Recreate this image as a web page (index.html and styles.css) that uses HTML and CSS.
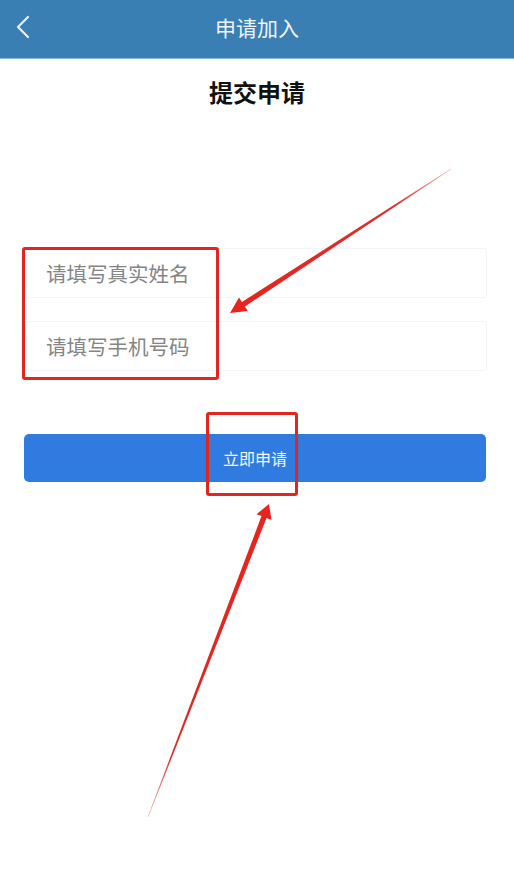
FILE: index.html
```html
<!DOCTYPE html>
<html lang="zh-CN">
<head>
<meta charset="utf-8">
<title>申请加入</title>
<link rel="stylesheet" href="styles.css">
</head>
<body>
<header class="topbar">
  <span class="back">
    <svg width="16" height="24" viewBox="0 0 16 24"><path d="M13 2 L3 12 L13 22" fill="none" stroke="#e9f1f8" stroke-width="2.2" stroke-linecap="round" stroke-linejoin="round"/></svg>
  </span>
  <h1 class="topbar-title">申请加入</h1>
</header>
<main class="page">
  <h2 class="subtitle">提交申请</h2>
  <div class="form">
    <div class="field"><span class="placeholder">请填写真实姓名</span></div>
    <div class="field"><span class="placeholder">请填写手机号码</span></div>
  </div>
  <div class="actions">
    <button class="submit">立即申请</button>
  </div>
</main>
<div class="mark mark-fields"></div>
<div class="mark mark-button"></div>
<svg class="arrows" width="514" height="894" viewBox="0 0 514 894">
  <defs>
    <linearGradient id="g1" x1="451" y1="169" x2="230" y2="313" gradientUnits="userSpaceOnUse">
      <stop offset="0" stop-color="#f2b8b6"/>
      <stop offset="0.25" stop-color="#d9302c"/>
      <stop offset="1" stop-color="#e8231d"/>
    </linearGradient>
    <linearGradient id="g2" x1="148" y1="817" x2="269" y2="504" gradientUnits="userSpaceOnUse">
      <stop offset="0" stop-color="#f2b8b6"/>
      <stop offset="0.2" stop-color="#dd2a24"/>
      <stop offset="1" stop-color="#e8231d"/>
    </linearGradient>
  </defs>
  <polygon fill="url(#g1)" points="230,313 247.8,311.0 244.9,306.5 451.2,169.3 450.8,168.7 241.9,302.1 239.0,297.6"/>
  <polygon fill="url(#g2)" points="269,504 271.5,520.0 266.5,518.1 148.3,817.1 147.7,816.9 261.5,516.1 256.5,514.2"/>
</svg>
</body>
</html>
```
FILE: styles.css
```css
* { box-sizing: border-box; }
html, body { margin: 0; padding: 0; background: #ffffff; }
body {
  width: 514px;
  min-height: 894px;
  position: relative;
  font-family: "Noto Sans CJK SC", "Noto Sans", sans-serif;
  color: #111;
}
.topbar {
  height: 59px;
  background: #3a7fb4;
  border-bottom: 1px solid #8dbbdf;
  display: flex;
  align-items: center;
  justify-content: center;
  position: relative;
}
.back {
  position: absolute;
  left: 15px;
  top: 15px;
  width: 16px;
  height: 24px;
  display: flex;
}
.topbar-title {
  margin: 0;
  font-size: 21px;
  font-weight: 400;
  color: #eef4fa;
  line-height: 28px;
  margin-top: -4px;
}
.page {
  display: flex;
  flex-direction: column;
}
.subtitle {
  margin: 17px 0 0;
  text-align: center;
  font-size: 24px;
  font-weight: 700;
  line-height: 32px;
  color: #111;
}
.form {
  margin-top: 140px;
  padding: 0 27px 0 25px;
  display: flex;
  flex-direction: column;
  gap: 23px;
}
.field {
  height: 50px;
  border: 1px solid #f3f4f6;
  border-radius: 3px;
  display: flex;
  align-items: center;
  padding-left: 20px;
}
.placeholder {
  font-size: 20.5px;
  color: #858585;
}
.actions {
  margin-top: 63px;
  padding: 0 28px 0 24px;
}
.submit {
  width: 100%;
  height: 48px;
  border: none;
  border-radius: 5px;
  background: #2f7be0;
  color: #f4f8fe;
  font-family: "Noto Sans CJK SC", "Noto Sans", sans-serif;
  font-size: 16px;
  padding: 0;
}
.mark {
  position: absolute;
  border: 3px solid #e0261f;
  border-radius: 3px;
}
.mark-fields {
  left: 22px;
  top: 247px;
  width: 197px;
  height: 133px;
}
.mark-button {
  left: 206px;
  top: 412px;
  width: 92px;
  height: 84px;
}
.arrows {
  position: absolute;
  left: 0;
  top: 0;
  pointer-events: none;
}
```
